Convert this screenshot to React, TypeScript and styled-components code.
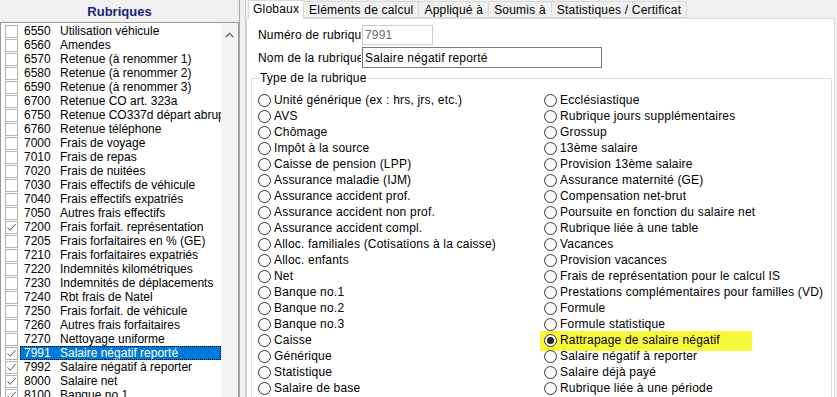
import React from 'react'
import styled, { createGlobalStyle } from 'styled-components'

const GlobalStyle = createGlobalStyle`
  html, body {
    margin: 0;
    padding: 0;
    background: #f0f0f0;
  }
  body {
    font-family: "Liberation Sans", Arial, sans-serif;
    font-size: 12px;
    color: #000;
  }
`

const Window = styled.div`
  display: flex;
  width: 837px;
  height: 397px;
  overflow: hidden;
  background: #f0f0f0;
`

const LeftPane = styled.div`
  display: flex;
  flex-direction: column;
  width: 239px;
  flex-shrink: 0;
`

const PaneHeader = styled.div`
  height: 22px;
  display: flex;
  align-items: center;
  justify-content: center;
  font-weight: bold;
  font-size: 13px;
  color: #1c2574;
`

const ListBox = styled.div`
  flex: 1;
  display: flex;
  background: #fff;
  border: 1px solid #9a9a9a;
  border-bottom: none;
  overflow: hidden;
`

const ListRows = styled.div`
  flex: 1;
  padding-top: 1px;
  overflow: hidden;
`

const ListRow = styled.div`
  display: flex;
  align-items: center;
  height: 14px;
  white-space: nowrap;
`

const RowLabel = styled.div<{ $selected?: boolean }>`
  display: flex;
  align-items: center;
  flex: 1;
  height: 14px;
  margin-left: 2px;
  padding-left: 4px;
  box-sizing: border-box;
  overflow: hidden;
  background: ${(p) => (p.$selected ? '#0078d7' : 'transparent')};
  color: ${(p) => (p.$selected ? '#fff' : '#000')};
  outline: ${(p) => (p.$selected ? '1px dotted #000' : 'none')};
  outline-offset: -1px;
`

const Box = styled.span`
  width: 11px;
  height: 11px;
  margin-left: 4px;
  border: 1px solid #b4b4b4;
  background: #fff;
  flex-shrink: 0;
  display: flex;
  align-items: center;
  justify-content: center;
`

const ItemCode = styled.span`
  width: 36px;
  flex-shrink: 0;
`

const ItemName = styled.span``

const ScrollBar = styled.div`
  width: 17px;
  flex-shrink: 0;
  background: #f4f4f4;
  display: flex;
  justify-content: center;
  padding-top: 9px;
  box-sizing: border-box;
`

const Splitter = styled.div`
  width: 7px;
  flex-shrink: 0;
  border-left: 1px solid #a8a8a8;
  border-right: 1px solid #c8c8c8;
  box-sizing: border-box;
`

const RightPane = styled.div`
  flex: 1;
  display: flex;
  flex-direction: column;
  padding-right: 2px;
  letter-spacing: 0.2px;
`

const TabBar = styled.div`
  height: 18px;
  display: flex;
  align-items: flex-end;
  padding-left: 2px;
`

const Tab = styled.div<{ $active?: boolean }>`
  height: ${(p) => (p.$active ? '19px' : '17px')};
  margin-bottom: ${(p) => (p.$active ? '-1px' : '0')};
  padding: ${(p) => (p.$active ? '0 4px 2px' : '0 5px')};
  display: flex;
  align-items: center;
  box-sizing: border-box;
  background: ${(p) => (p.$active ? '#fff' : '#f0f0f0')};
  border: 1px solid #d9d9d9;
  border-bottom: ${(p) => (p.$active ? 'none' : '1px solid #d9d9d9')};
  margin-right: -1px;
  white-space: nowrap;
  position: relative;
  z-index: ${(p) => (p.$active ? 1 : 0)};
`

const TabPanel = styled.div`
  flex: 1;
  background: #fff;
  border: 1px solid #d9d9d9;
  border-bottom: none;
  padding: 6px 2px 0 4px;
  display: flex;
  flex-direction: column;
`

const FieldRow = styled.div`
  display: flex;
  align-items: center;
  gap: 1px;
  margin-bottom: 2px;
  padding-left: 7px;
`

const FieldLabel = styled.span`
  width: 103px;
  white-space: nowrap;
  overflow: hidden;
`

const TextInput = styled.div<{ $disabled?: boolean; $width: number }>`
  width: ${(p) => p.$width}px;
  height: ${(p) => (p.$disabled ? 20 : 21)}px;
  box-sizing: border-box;
  border: 1px solid ${(p) => (p.$disabled ? '#cccccc' : '#7a7a7a')};
  color: ${(p) => (p.$disabled ? '#6d6d6d' : '#000')};
  display: flex;
  align-items: center;
  padding-left: 2px;
`

const GroupBox = styled.fieldset`
  margin: 2px 0 0 0;
  padding: 7px 0 0 6px;
  border: 1px solid #dcdcdc;
  border-bottom: none;
  flex: 1;
  min-width: 0;
`

const Legend = styled.legend`
  padding: 0 1px;
  margin-left: 1px;
  line-height: 13px;
`

const RadioGrid = styled.div`
  display: grid;
  grid-template-columns: 286px 1fr;
  grid-template-rows: repeat(19, 16px);
  grid-auto-flow: column;
`

const RadioRow = styled.div<{ $marked?: boolean }>`
  display: flex;
  align-items: center;
  white-space: nowrap;
  justify-self: start;
  height: 16px;
  padding: 0 ${(p) => (p.$marked ? '32px' : '0')} 0 ${(p) => (p.$marked ? '4px' : '0')};
  margin-left: ${(p) => (p.$marked ? '-4px' : '0')};
  background: ${(p) => (p.$marked ? '#f8f83a' : 'transparent')};
  box-shadow: ${(p) => (p.$marked ? '0 3px 0 #f8f83a, 0 -1px 0 #f8f83a' : 'none')};
`

const Radio = styled.span<{ $checked?: boolean }>`
  width: 11px;
  height: 11px;
  border: 1px solid #333;
  border-radius: 50%;
  background: #fff;
  margin-right: 3px;
  flex-shrink: 0;
  display: flex;
  align-items: center;
  justify-content: center;
  &::after {
    content: '';
    display: ${(p) => (p.$checked ? 'block' : 'none')};
    width: 7px;
    height: 7px;
    border-radius: 50%;
    background: #222;
  }
`

const rubriques: [string, string, boolean][] = [
  ['6550', 'Utilisation véhicule', false],
  ['6560', 'Amendes', false],
  ['6570', 'Retenue (à renommer 1)', false],
  ['6580', 'Retenue (à renommer 2)', false],
  ['6590', 'Retenue (à renommer 3)', false],
  ['6700', 'Retenue CO art. 323a', false],
  ['6750', 'Retenue CO337d départ abrupt', false],
  ['6760', 'Retenue téléphone', false],
  ['7000', 'Frais de voyage', false],
  ['7010', 'Frais de repas', false],
  ['7020', 'Frais de nuitées', false],
  ['7030', 'Frais effectifs de véhicule', false],
  ['7040', 'Frais effectifs expatriés', false],
  ['7050', 'Autres frais effectifs', false],
  ['7200', 'Frais forfait. représentation', true],
  ['7205', 'Frais forfaitaires en % (GE)', false],
  ['7210', 'Frais forfaitaires expatriés', false],
  ['7220', 'Indemnités kilométriques', false],
  ['7230', 'Indemnités de déplacements', false],
  ['7240', 'Rbt frais de Natel', false],
  ['7250', 'Frais forfait. de véhicule', false],
  ['7260', 'Autres frais forfaitaires', false],
  ['7270', 'Nettoyage uniforme', false],
  ['7991', 'Salaire négatif reporté', true],
  ['7992', 'Salaire négatif à reporter', true],
  ['8000', 'Salaire net', true],
  ['8100', 'Banque no.1', true],
]

const types = [
  'Unité générique (ex : hrs, jrs, etc.)',
  'AVS',
  'Chômage',
  'Impôt à la source',
  'Caisse de pension (LPP)',
  'Assurance maladie (IJM)',
  'Assurance accident prof.',
  'Assurance accident non prof.',
  'Assurance accident compl.',
  'Alloc. familiales (Cotisations à la caisse)',
  'Alloc. enfants',
  'Net',
  'Banque no.1',
  'Banque no.2',
  'Banque no.3',
  'Caisse',
  'Générique',
  'Statistique',
  'Salaire de base',
  'Ecclésiastique',
  'Rubrique jours supplémentaires',
  'Grossup',
  '13ème salaire',
  'Provision 13ème salaire',
  'Assurance maternité (GE)',
  'Compensation net-brut',
  'Poursuite en fonction du salaire net',
  'Rubrique liée à une table',
  'Vacances',
  'Provision vacances',
  'Frais de représentation pour le calcul IS',
  'Prestations complémentaires pour familles (VD)',
  'Formule',
  'Formule statistique',
  'Rattrapage de salaire négatif',
  'Salaire négatif à reporter',
  'Salaire déjà payé',
  'Rubrique liée à une période',
]

const tabs = ['Globaux', 'Eléments de calcul', 'Appliqué à', 'Soumis à', 'Statistiques / Certificat']

const Check = () => (
  <svg width="11" height="11" viewBox="0 0 11 11">
    <polyline points="1.5,5.5 4.2,8.3 9.6,2" fill="none" stroke="#555" strokeWidth="1" />
  </svg>
)

const ChevronUp = () => (
  <svg width="9" height="6" viewBox="0 0 9 6">
    <polyline points="0.8,5 4.5,1.3 8.2,5" fill="none" stroke="#606060" strokeWidth="1.3" />
  </svg>
)

const App = () => {
  const selected = 'Rattrapage de salaire négatif'
  return (
    <>
      <GlobalStyle />
      <Window>
        <LeftPane>
          <PaneHeader>Rubriques</PaneHeader>
          <ListBox>
            <ListRows>
              {rubriques.map(([code, name, checked]) => (
                <ListRow key={code}>
                  <Box>{checked && <Check />}</Box>
                  <RowLabel $selected={code === '7991'}>
                    <ItemCode>{code}</ItemCode>
                    <ItemName>{name}</ItemName>
                  </RowLabel>
                </ListRow>
              ))}
            </ListRows>
            <ScrollBar>
              <ChevronUp />
            </ScrollBar>
          </ListBox>
        </LeftPane>
        <Splitter />
        <RightPane>
          <TabBar>
            {tabs.map((t, i) => (
              <Tab key={t} $active={i === 0}>
                {t}
              </Tab>
            ))}
          </TabBar>
          <TabPanel>
            <FieldRow>
              <FieldLabel>Numéro de rubrique</FieldLabel>
              <TextInput $disabled $width={71}>
                7991
              </TextInput>
            </FieldRow>
            <FieldRow>
              <FieldLabel>Nom de la rubrique</FieldLabel>
              <TextInput $width={240}>Salaire négatif reporté</TextInput>
            </FieldRow>
            <GroupBox>
              <Legend>Type de la rubrique</Legend>
              <RadioGrid>
                {types.map((t) => (
                  <RadioRow key={t} $marked={t === selected}>
                    <Radio $checked={t === selected} />
                    {t}
                  </RadioRow>
                ))}
              </RadioGrid>
            </GroupBox>
          </TabPanel>
        </RightPane>
      </Window>
    </>
  )
}

export default App
